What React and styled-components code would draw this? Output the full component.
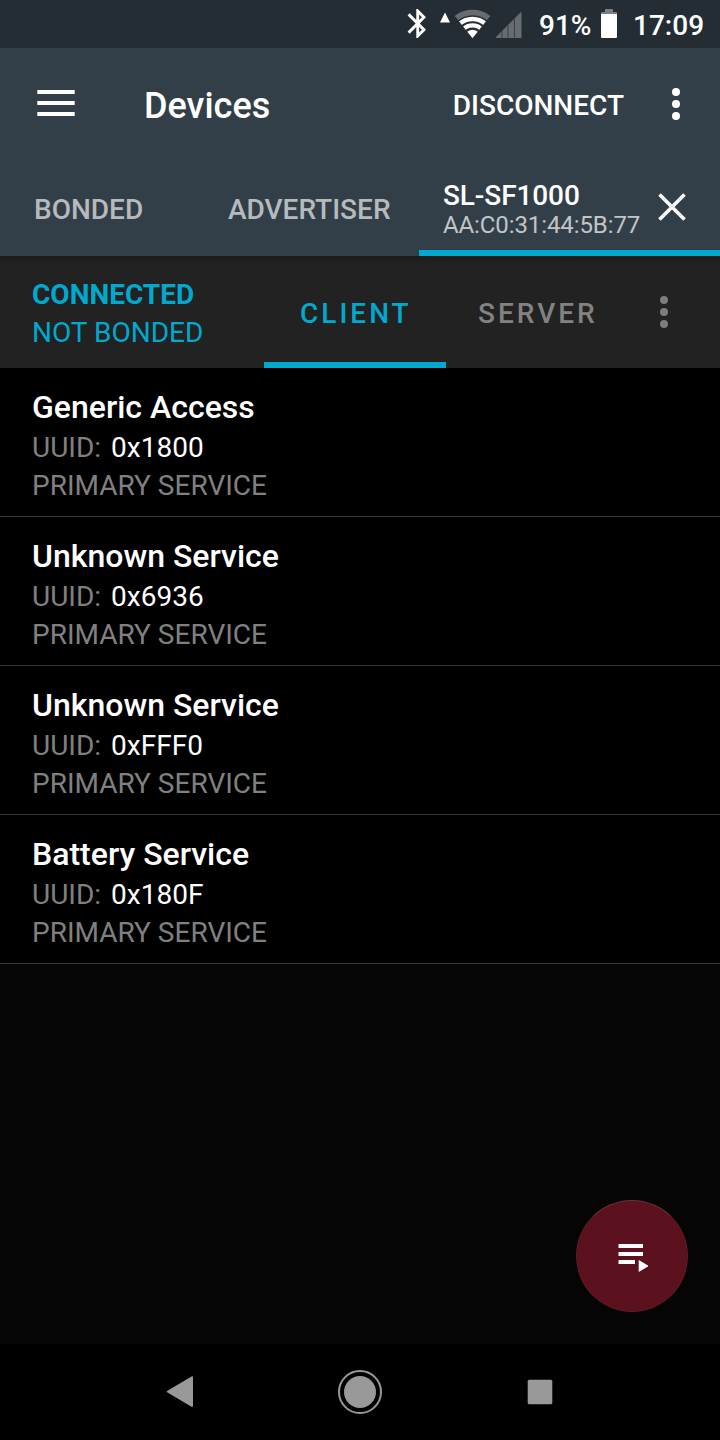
import styled, { createGlobalStyle } from "styled-components";

const GlobalStyle = createGlobalStyle`
  * {
    box-sizing: border-box;
  }
  body {
    margin: 0;
    background: #000;
    font-family: Roboto, "Liberation Sans", sans-serif;
  }
  svg {
    display: block;
    flex-shrink: 0;
  }
  button {
    padding: 0;
    border: 0;
    background: none;
    font-family: inherit;
  }
`;

const Screen = styled.div`
  position: relative;
  width: 720px;
  height: 1440px;
  display: flex;
  flex-direction: column;
  overflow: hidden;
  background: #050505;
`;

const StatusBar = styled.div`
  height: 48px;
  display: flex;
  align-items: flex-start;
  justify-content: flex-end;
  padding: 9px 16px 0 0;
  background: #252d34;
`;

const StatusText = styled.span`
  width: ${(props) => props.$width}px;
  margin-left: ${(props) => props.$gap}px;
  font-size: 28px;
  line-height: 33px;
  font-weight: 500;
  color: #fff;
  white-space: nowrap;
`;

const StatusIcon = styled.svg`
  margin-left: ${(props) => props.$gap || 0}px;
`;

const Toolbar = styled.header`
  height: 112px;
  display: flex;
  align-items: center;
  padding: 0 40px 0 37px;
  background: #333f48;
`;

const Title = styled.h1`
  flex: 1;
  margin: 4px 0 0 69px;
  font-size: 36px;
  line-height: 42px;
  font-weight: 500;
  color: #fff;
`;

const ToolbarButton = styled.button`
  margin: 3px 48px 0 0;
  font-size: 28px;
  line-height: 33px;
  font-weight: 500;
  color: #fff;
`;

const TabBar = styled.nav`
  height: 96px;
  display: flex;
  background: #333f48;
`;

const Tab = styled.div`
  width: ${(props) => props.$width}px;
  padding: 33px 0 0 ${(props) => props.$left}px;
  font-size: 28px;
  line-height: 33px;
  font-weight: 500;
  color: #b6babd;
`;

const DeviceTab = styled.div`
  flex: 1;
  display: flex;
  justify-content: space-between;
  padding: 19px 34px 0 24px;
  border-bottom: 6px solid #00a9ce;
`;

const DeviceName = styled.div`
  font-size: 28px;
  line-height: 33px;
  font-weight: 500;
  letter-spacing: -0.1px;
  color: #fff;
`;

const DeviceAddress = styled.div`
  margin-top: -1px;
  font-size: 24px;
  line-height: 28px;
  letter-spacing: -0.1px;
  color: #c2c5c8;
`;

const CloseIcon = styled.svg`
  margin-top: 14px;
`;

const ConnectionBar = styled.div`
  height: 112px;
  display: flex;
  background: linear-gradient(#1b1b1b, #222 9px);
`;

const ConnectionState = styled.div`
  width: 264px;
  padding: 20px 0 0 32px;
  font-size: 28px;
  line-height: 38px;
  color: #00a9ce;
  div:first-child {
    font-weight: 700;
  }
`;

const RoleTab = styled.div`
  width: 182px;
  padding: 41px 0 0 ${(props) => props.$left}px;
  border-bottom: 6px solid ${(props) => (props.$active ? "#00a9ce" : "transparent")};
  font-size: 28px;
  line-height: 33px;
  font-weight: 500;
  letter-spacing: 3px;
  color: ${(props) => (props.$active ? "#00a9ce" : "#828282")};
`;

const MoreMenu = styled.div`
  padding: 40px 0 0 32px;
`;

const ServiceRow = styled.li`
  height: 149px;
  padding: 20px 32px 0;
  border-bottom: 1px solid #353535;
  background: #000;
`;

const ServiceList = styled.ul`
  flex: 1;
  margin: 0;
  padding: 0;
  list-style: none;
`;

const ServiceName = styled.div`
  font-size: 32px;
  line-height: 38px;
  font-weight: 500;
  color: #fff;
`;

const ServiceLine = styled.div`
  display: flex;
  gap: 10px;
  margin-top: ${(props) => props.$top || 0}px;
  font-size: 28px;
  line-height: 38px;
  color: #808080;
  span {
    color: #fff;
  }
`;

const MacroButton = styled.button`
  position: absolute;
  right: 32px;
  bottom: 128px;
  width: 112px;
  height: 112px;
  display: flex;
  align-items: center;
  justify-content: center;
  border: 1px solid #5f1a26;
  border-top-color: #6e303a;
  border-radius: 50%;
  background: #5b121e;
`;

const NavigationBar = styled.div`
  height: 96px;
  display: flex;
  align-items: center;
  padding-left: 166px;
  background: #000;
`;

const HomeIcon = styled.svg`
  margin: 0 146px 0 144px;
`;

const services = [
  { name: "Generic Access", uuid: "0x1800" },
  { name: "Unknown Service", uuid: "0x6936" },
  { name: "Unknown Service", uuid: "0xFFF0" },
  { name: "Battery Service", uuid: "0x180F" },
];

const Dots = ({ color }) => (
  <svg width="8" height="32" viewBox="0 0 8 32" fill={color}>
    <circle cx="4" cy="4" r="4" />
    <circle cx="4" cy="16" r="4" />
    <circle cx="4" cy="28" r="4" />
  </svg>
);

const StatusIcons = () => (
  <>
    <StatusIcon width="19" height="29" viewBox="4.7 2 12.9 20" fill="#fff">
      <path d="M17.71 7.71L12 2h-1v7.59L6.41 5 5 6.41 10.59 12 5 17.59 6.41 19 11 14.41V22h1l5.71-5.71-4.3-4.29 4.3-4.29zM13 5.83l1.88 1.88L13 9.59V5.83zm1.88 10.46L13 18.17v-3.76l1.88 1.88z" />
    </StatusIcon>
    <StatusIcon $gap={14} width="10" height="30" viewBox="0 0 10 30" fill="#fff">
      <path d="M5 3.5L10 13.5H0z" />
    </StatusIcon>
    <StatusIcon $gap={5} width="35" height="30" viewBox="0 0 35 30">
      <clipPath id="fan">
        <path d="M17.5 29.3L-1 6V0H36V6z" />
      </clipPath>
      <g clipPath="url(#fan)" fill="none" stroke="#fff" strokeWidth="4.4">
        <circle cx="17.5" cy="29.3" r="25.8" stroke="#676c71" strokeWidth="5.4" />
        <circle cx="17.5" cy="29.3" r="19.3" />
        <circle cx="17.5" cy="29.3" r="12.9" />
        <circle cx="17.5" cy="29.3" r="8.6" fill="#fff" stroke="none" />
      </g>
    </StatusIcon>
    <StatusIcon $gap={6} width="26" height="30" viewBox="0 0 26 30">
      <path d="M0 29V28L25 3H25.5V29z" fill="#676c71" />
      <path d="M6 22V29M12 16V29M18.5 9V29" stroke="#3a4248" />
    </StatusIcon>
  </>
);

const BatteryIcon = () => (
  <StatusIcon $gap={9} width="16" height="30" viewBox="0 0 16 30">
    <path d="M4 0H12V3H15Q16 3 16 4V6H0V4Q0 3 1 3H4z" fill="#7b8085" />
    <path d="M0 5H16V28Q16 29 15 29H1Q0 29 0 28z" fill="#fff" />
  </StatusIcon>
);

const App = () => {
  return (
    <>
      <GlobalStyle />
      <Screen>
        <StatusBar>
          <StatusIcons />
          <StatusText $gap={17} $width={53}>91%</StatusText>
          <BatteryIcon />
          <StatusText $gap={16} $width={71}>17:09</StatusText>
        </StatusBar>
        <Toolbar>
          <svg width="38" height="32" viewBox="0 0 38 32" fill="#fff">
            <path d="M.3 2H37.7V6H.3zM.3 13H37.7V17H.3zM.3 24H37.7V28H.3z" />
          </svg>
          <Title>Devices</Title>
          <ToolbarButton>DISCONNECT</ToolbarButton>
          <Dots color="#fff" />
        </Toolbar>
        <TabBar>
          <Tab $width={200} $left={34}>BONDED</Tab>
          <Tab $width={219} $left={28}>ADVERTISER</Tab>
          <DeviceTab>
            <div>
              <DeviceName>SL-SF1000</DeviceName>
              <DeviceAddress>AA:C0:31:44:5B:77</DeviceAddress>
            </div>
            <CloseIcon width="28" height="28" viewBox="0 0 28 28" stroke="#fff" strokeWidth="3.6">
              <path d="M1.5 1.5L26.5 26.5M26.5 1.5L1.5 26.5" />
            </CloseIcon>
          </DeviceTab>
        </TabBar>
        <ConnectionBar>
          <ConnectionState>
            <div>CONNECTED</div>
            <div>NOT BONDED</div>
          </ConnectionState>
          <RoleTab $active $left={36}>CLIENT</RoleTab>
          <RoleTab $left={32}>SERVER</RoleTab>
          <MoreMenu>
            <Dots color="#7d7d7d" />
          </MoreMenu>
        </ConnectionBar>
        <ServiceList>
          {services.map((service) => (
            <ServiceRow key={service.uuid}>
              <ServiceName>{service.name}</ServiceName>
              <ServiceLine $top={3}>
                UUID: <span>{service.uuid}</span>
              </ServiceLine>
              <ServiceLine>PRIMARY SERVICE</ServiceLine>
            </ServiceRow>
          ))}
        </ServiceList>
        <MacroButton>
          <svg width="32" height="32" viewBox="0 0 32 32" fill="#fff">
            <path d="M2.5 4H27V8H2.5zM2.5 12H27V16H2.5zM2.5 20H19V24H2.5zM22.7 20L33 26L22.7 32z" />
          </svg>
        </MacroButton>
        <NavigationBar>
          <svg width="28" height="32" viewBox="0 0 28 32" fill="#999">
            <path d="M25.5 .5Q27 -.2 27 1.5V29.8Q27 31.5 25.5 30.7L1.5 16.6Q0 15.7 1.5 14.8z" />
          </svg>
          <HomeIcon width="44" height="44" viewBox="0 0 44 44" fill="#999">
            <circle cx="22" cy="22" r="16" />
            <circle cx="22" cy="22" r="21" fill="none" stroke="#999" strokeWidth="2" />
          </HomeIcon>
          <svg width="24" height="24" viewBox="0 0 24 24" fill="#999" overflow="visible">
            <rect x="-.3" y="-.3" width="24.6" height="24.6" rx="1.5" />
          </svg>
        </NavigationBar>
      </Screen>
    </>
  );
};

export default App;
